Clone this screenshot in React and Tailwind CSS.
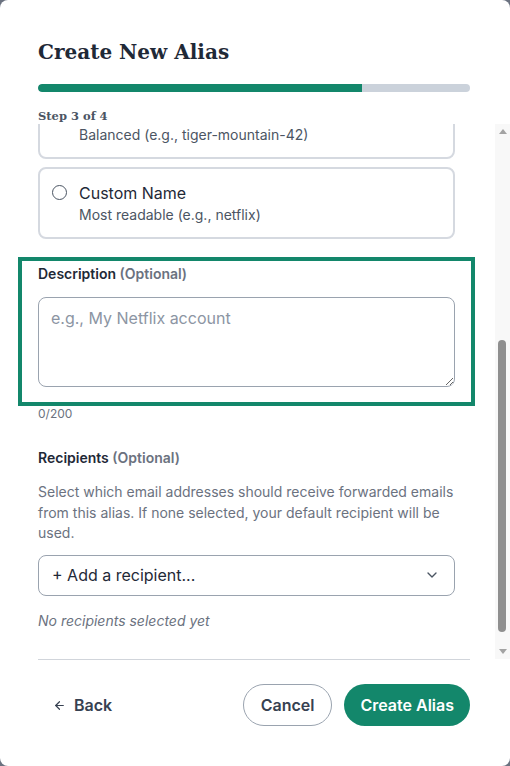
import React, { useLayoutEffect, useRef } from "react";
import { ArrowLeft, ChevronDown } from "lucide-react";

const serif = { fontFamily: '"DejaVu Serif", "Liberation Serif", serif' };

const options = [
  { title: "Random Characters", sub: "Most private (e.g., x7k2m9qp)" },
  { title: "Random Words", sub: "Easy to remember (e.g., bright-river-sky)" },
  { title: "Short Code", sub: "Compact (e.g., k4z9)" },
  { title: "Words + Number", sub: "Balanced (e.g., tiger-mountain-42)" },
  { title: "Custom Name", sub: "Most readable (e.g., netflix)" },
];

function OptionCard({ title, sub, cardRef }) {
  return (
    <label
      ref={cardRef}
      className="flex items-start gap-3 rounded-lg border-2 border-[#d5d9e0] bg-white px-3 py-3"
    >
      <span className="mt-[4px] h-[15px] w-[15px] shrink-0 rounded-full border-[1.5px] border-[#4b5563] bg-white" />
      <span className="flex flex-col">
        <span className="text-base leading-6 text-[#1f2937]">{title}</span>
        <span className="text-sm leading-5 text-[#4b5563]">{sub}</span>
      </span>
    </label>
  );
}

function ScrollBar() {
  return (
    <div className="flex w-[15px] shrink-0 flex-col items-center bg-[#f8f8f8]">
      <div className="flex h-[15px] items-center justify-center">
        <span className="h-0 w-0 border-x-[4px] border-b-[5px] border-x-transparent border-b-[#a3a3a3]" />
      </div>
      <div className="relative w-full flex-1">
        <div className="absolute left-[3px] top-[201px] h-[292px] w-[8px] rounded-full bg-[#8f8f8f]" />
      </div>
      <div className="flex h-[15px] items-center justify-center">
        <span className="h-0 w-0 border-x-[4px] border-t-[5px] border-x-transparent border-t-[#a3a3a3]" />
      </div>
    </div>
  );
}

export default function App() {
  const scrollRef = useRef(null);
  const customRef = useRef(null);

  useLayoutEffect(() => {
    const box = scrollRef.current;
    const card = customRef.current;
    if (box && card) box.scrollTop = card.offsetTop - 43;
  }, []);

  return (
    <div
      className="h-[766px] w-[510px] bg-[#6b7280]"
      style={{ fontFamily: 'Inter, "Noto Sans", sans-serif' }}
    >
      <div className="flex h-full w-full flex-col overflow-hidden rounded-lg bg-white">
        {/* header */}
        <div className="pl-[38px] pr-[40px] pt-[38px]">
          <h1 className="text-[20px] font-bold leading-[28px] text-[#1f2937]" style={serif}>
            Create New Alias
          </h1>
          <div className="mt-[18px] h-2 w-full overflow-hidden rounded-full bg-[#cbd2db]">
            <div className="h-full w-3/4 rounded-l-full bg-[#13876b]" />
          </div>
          <p className="mt-4 text-[11.5px] font-bold leading-4 text-[#4b5563]" style={serif}>
            Step 3 of 4
          </p>
        </div>

        {/* scrolling form body */}
        <div className="flex min-h-0 flex-1">
          <div
            ref={scrollRef}
            className="relative min-h-0 flex-1 overflow-y-auto pl-[38px] pr-[40px] [scrollbar-width:none]"
          >
            <div className="pt-5">
              <p className="text-sm font-semibold leading-5 text-[#1f2937]">Alias Format</p>
              <p className="mt-1 text-sm leading-5 text-[#6b7280]">
                Choose how your alias address is generated.
              </p>
              <div className="mt-3 flex flex-col gap-2">
                {options.map((o) => (
                  <OptionCard
                    key={o.title}
                    title={o.title}
                    sub={o.sub}
                    cardRef={o.title === "Custom Name" ? customRef : undefined}
                  />
                ))}
              </div>
            </div>

            {/* description field */}
            <div className="-mx-5 mt-[18px] border-4 border-[#13876b] px-4 pt-[3px] pb-[15px]">
              <p className="text-sm font-semibold leading-5 text-[#1f2937]">
                Description <span className="font-semibold text-[#6b7280]">(Optional)</span>
              </p>
              <textarea
                className="mt-[13px] block h-[90px] w-full resize-y rounded-lg border border-[#9aa3af] px-3 py-2 text-base leading-6 text-[#1f2937] placeholder:text-[#8c95a3] focus:outline-none"
                placeholder="e.g., My Netflix account"
              />
            </div>
            <p className="text-xs leading-4 text-[#6b7280]">0/200</p>

            {/* recipients */}
            <p className="mt-[26px] text-sm font-semibold leading-5 text-[#1f2937]">
              Recipients <span className="text-[#6b7280]">(Optional)</span>
            </p>
            <p className="mt-[14px] text-sm leading-[20.5px] text-[#6b7280]">
              Select which email addresses should receive forwarded emails from this alias. If none
              selected, your default recipient will be used.
            </p>
            <div className="mt-[11px] flex h-[41px] items-center justify-between rounded-lg border border-[#9aa3af] pl-[13px] pr-[14px]">
              <span className="text-base text-[#1f2937]">+ Add a recipient...</span>
              <ChevronDown size={16} strokeWidth={2} className="text-[#4b5563]" />
            </div>
            <p className="mt-[15px] pb-12 text-sm italic leading-5 text-[#6b7280]">
              No recipients selected yet
            </p>
          </div>
          <ScrollBar />
        </div>

        {/* footer */}
        <div className="ml-[38px] mr-[40px] flex items-center justify-between border-t border-[#d1d5db] pt-6 pb-10">
          <button className="flex h-[42px] items-center gap-2 px-[15px] text-base font-semibold text-[#374151]">
            <ArrowLeft size={13} strokeWidth={2.2} />
            Back
          </button>
          <div className="flex items-center gap-3">
            <button className="h-[42px] rounded-full border border-[#9aa3af] px-[17px] text-base font-semibold text-[#374151]">
              Cancel
            </button>
            <button className="h-[42px] rounded-full bg-[#13876b] px-4 text-base font-semibold text-white">
              Create Alias
            </button>
          </div>
        </div>
      </div>
    </div>
  );
}
